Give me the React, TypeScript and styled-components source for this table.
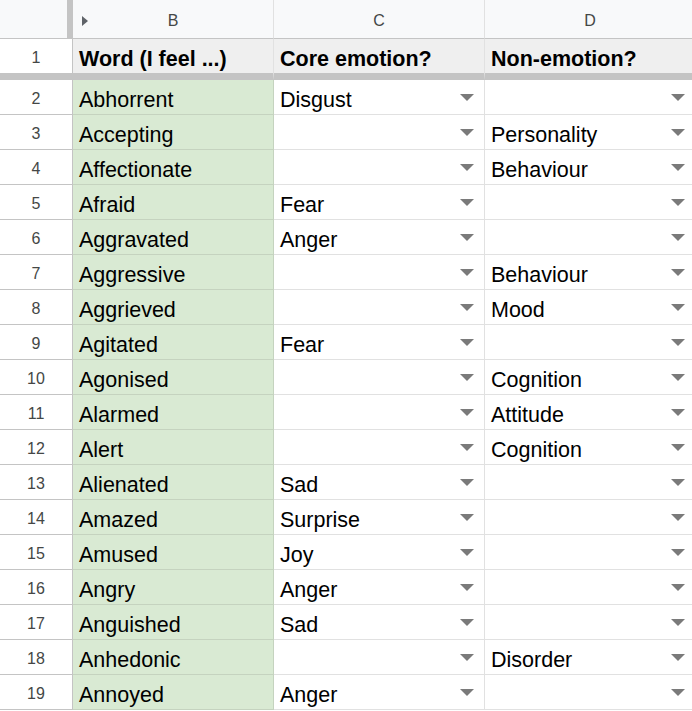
import React from "react";
import styled, { createGlobalStyle } from "styled-components";

const Global = createGlobalStyle`
  html, body { margin: 0; padding: 0; background: #fff; overflow: hidden; }
  body { font-family: "Liberation Sans", Arial, sans-serif; }
`;

const Sheet = styled.div`
  display: grid;
  grid-template-columns: 73px 201px 211px 211px;
  width: 696px;
`;

const Corner = styled.div`
  height: 39px;
  box-sizing: border-box;
  background: #f8f9fa;
  border-right: 6px solid #c4c4c4;
  border-bottom: 1px solid #c4c4c4;
`;

const ColHead = styled.div`
  height: 39px;
  box-sizing: border-box;
  padding-top: 4px;
  background: #f8f9fa;
  border-right: 1px solid #e1e1e1;
  border-bottom: 1px solid #c4c4c4;
  display: flex;
  align-items: center;
  justify-content: center;
  position: relative;
  font-size: 16px;
  color: #444746;
`;

const Expand = styled.span`
  position: absolute;
  left: 9px;
  top: 16px;
  width: 0;
  height: 0;
  border-top: 5px solid transparent;
  border-bottom: 5px solid transparent;
  border-left: 6px solid #5f6368;
`;

const RowNum = styled.div<{ $frozen?: boolean }>`
  height: ${(p) => (p.$frozen ? 41 : 35)}px;
  box-sizing: border-box;
  padding-top: 4px;
  background: #fff;
  border-right: 1px solid #c4c4c4;
  border-bottom: ${(p) => (p.$frozen ? "7px solid #c4c4c4" : "1px solid #c4c4c4")};
  display: flex;
  align-items: center;
  justify-content: center;
  font-size: 16px;
  color: #444746;
`;

const Cell = styled.div<{ $frozen?: boolean; $green?: boolean }>`
  height: ${(p) => (p.$frozen ? 41 : 35)}px;
  box-sizing: border-box;
  background: ${(p) => (p.$frozen ? "#efefef" : p.$green ? "#d9ead3" : "#fff")};
  border-right: 1px solid ${(p) => (p.$green ? "#c5d3bf" : "#e1e1e1")};
  border-bottom: ${(p) =>
    p.$frozen ? "7px solid #c4c4c4" : `1px solid ${p.$green ? "#c5d3bf" : "#e1e1e1"}`};
  display: flex;
  align-items: flex-end;
  justify-content: space-between;
  padding: 0 10px 2px 6px;
  font-size: 21.5px;
  line-height: 24px;
  font-weight: ${(p) => (p.$frozen ? 700 : 400)};
  color: #000;
  white-space: nowrap;
  overflow: hidden;
`;

const Arrow = styled.span`
  align-self: center;
  width: 0;
  height: 0;
  border-left: 7px solid transparent;
  border-right: 7px solid transparent;
  border-top: 7px solid #7a7a7a;
  margin-top: 2px;
  flex: none;
`;

const rows: [string, string, string][] = [
  ["Abhorrent", "Disgust", ""],
  ["Accepting", "", "Personality"],
  ["Affectionate", "", "Behaviour"],
  ["Afraid", "Fear", ""],
  ["Aggravated", "Anger", ""],
  ["Aggressive", "", "Behaviour"],
  ["Aggrieved", "", "Mood"],
  ["Agitated", "Fear", ""],
  ["Agonised", "", "Cognition"],
  ["Alarmed", "", "Attitude"],
  ["Alert", "", "Cognition"],
  ["Alienated", "Sad", ""],
  ["Amazed", "Surprise", ""],
  ["Amused", "Joy", ""],
  ["Angry", "Anger", ""],
  ["Anguished", "Sad", ""],
  ["Anhedonic", "", "Disorder"],
  ["Annoyed", "Anger", ""],
];

export default function App() {
  return (
    <>
      <Global />
      <Sheet>
        <Corner />
        <ColHead>
          <Expand />B
        </ColHead>
        <ColHead>C</ColHead>
        <ColHead>D</ColHead>

        <RowNum $frozen>1</RowNum>
        <Cell $frozen>Word (I feel ...)</Cell>
        <Cell $frozen>Core emotion?</Cell>
        <Cell $frozen>Non-emotion?</Cell>

        {rows.map(([w, c, d], i) => (
          <React.Fragment key={w}>
            <RowNum>{i + 2}</RowNum>
            <Cell $green>{w}</Cell>
            <Cell>
              <span>{c}</span>
              <Arrow />
            </Cell>
            <Cell>
              <span>{d}</span>
              <Arrow />
            </Cell>
          </React.Fragment>
        ))}
      </Sheet>
    </>
  );
}
